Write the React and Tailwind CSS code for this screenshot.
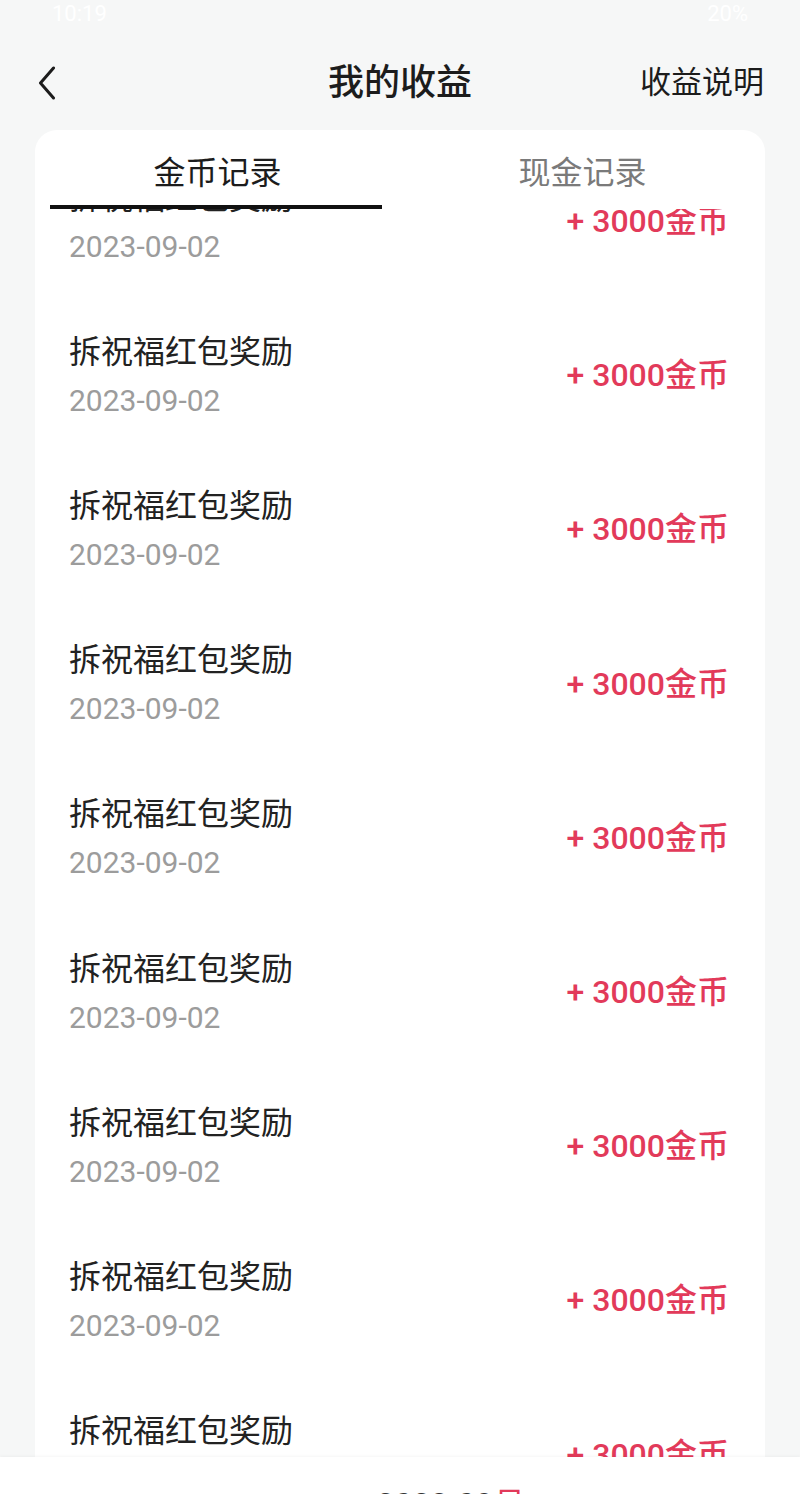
const records = Array.from({ length: 9 }, () => ({
	title: '拆祝福红包奖励',
	date: '2023-09-02',
	amount: '+ 3000金币',
}))

function BackIcon() {
	return (
		<svg viewBox="0 0 18 34" className="h-[34px] w-[18px]" fill="none" stroke="currentColor" strokeWidth="3" strokeLinecap="round" strokeLinejoin="round">
			<path d="M15.5 2 L2.5 17 L15.5 32" />
		</svg>
	)
}

export default function App() {
	return (
		<div
			className="flex flex-col h-[1494px] overflow-hidden bg-[#f6f7f7] text-[#1c1c1c]"
			style={{ fontFamily: "Roboto, 'Noto Sans CJK SC', sans-serif" }}
		>
			{/* status bar */}
			<div className="flex items-center justify-between h-[40px] px-[52px] pb-[14px] text-[22px] text-white">
				<span>10:19</span>
				<span>20%</span>
			</div>

			{/* header */}
			<div className="relative flex items-center justify-between h-[86px] pl-[38px] pr-[36px]">
				<BackIcon />
				<span className="absolute left-1/2 -translate-x-1/2 text-[36px] font-medium">我的收益</span>
				<span className="text-[31px]">收益说明</span>
			</div>

			{/* card */}
			<div className="flex flex-col flex-1 min-h-0 mt-[4px] mx-[35px] bg-white rounded-t-[22px] overflow-hidden">
				{/* tabs */}
				<div className="flex shrink-0 h-[75px]">
					<div className="flex flex-1 items-center justify-center pt-[10px] text-[32px] text-[#1c1c1c]">金币记录</div>
					<div className="flex flex-1 items-center justify-center pt-[10px] text-[32px] text-[#7a7a7a]">现金记录</div>
				</div>
				<div className="shrink-0 ml-[15px] w-[332px] h-[4px] bg-[#111]" />

				{/* list */}
				<div className="flex-1 min-h-0 overflow-hidden">
					<div className="-mt-[65px]">
						{records.map((r, i) => (
							<div key={i} className="flex items-center justify-between h-[154.2px] pl-[34px] pr-[36px]">
								<div className="flex flex-col gap-[15px]">
									<span className="text-[32px] leading-[36px] text-[#222]">{r.title}</span>
									<span className="text-[30px] leading-[32px] text-[#9c9c9c]">{r.date}</span>
								</div>
								<span className="text-[32px] font-medium text-[#e23a5a] whitespace-pre">{r.amount}</span>
							</div>
						))}
					</div>
				</div>
			</div>

			{/* bottom bar */}
			<div className="shrink-0 h-[37px] bg-white shadow-[0_-1px_3px_rgba(0,0,0,0.04)] overflow-hidden">
				<div className="flex justify-center pl-[102px] pt-[28px] text-[32px] leading-[38px]">
					<span className="text-[#333]">2023-09</span>
					<span className="text-[#e23a5a]">月</span>
				</div>
			</div>
		</div>
	)
}
